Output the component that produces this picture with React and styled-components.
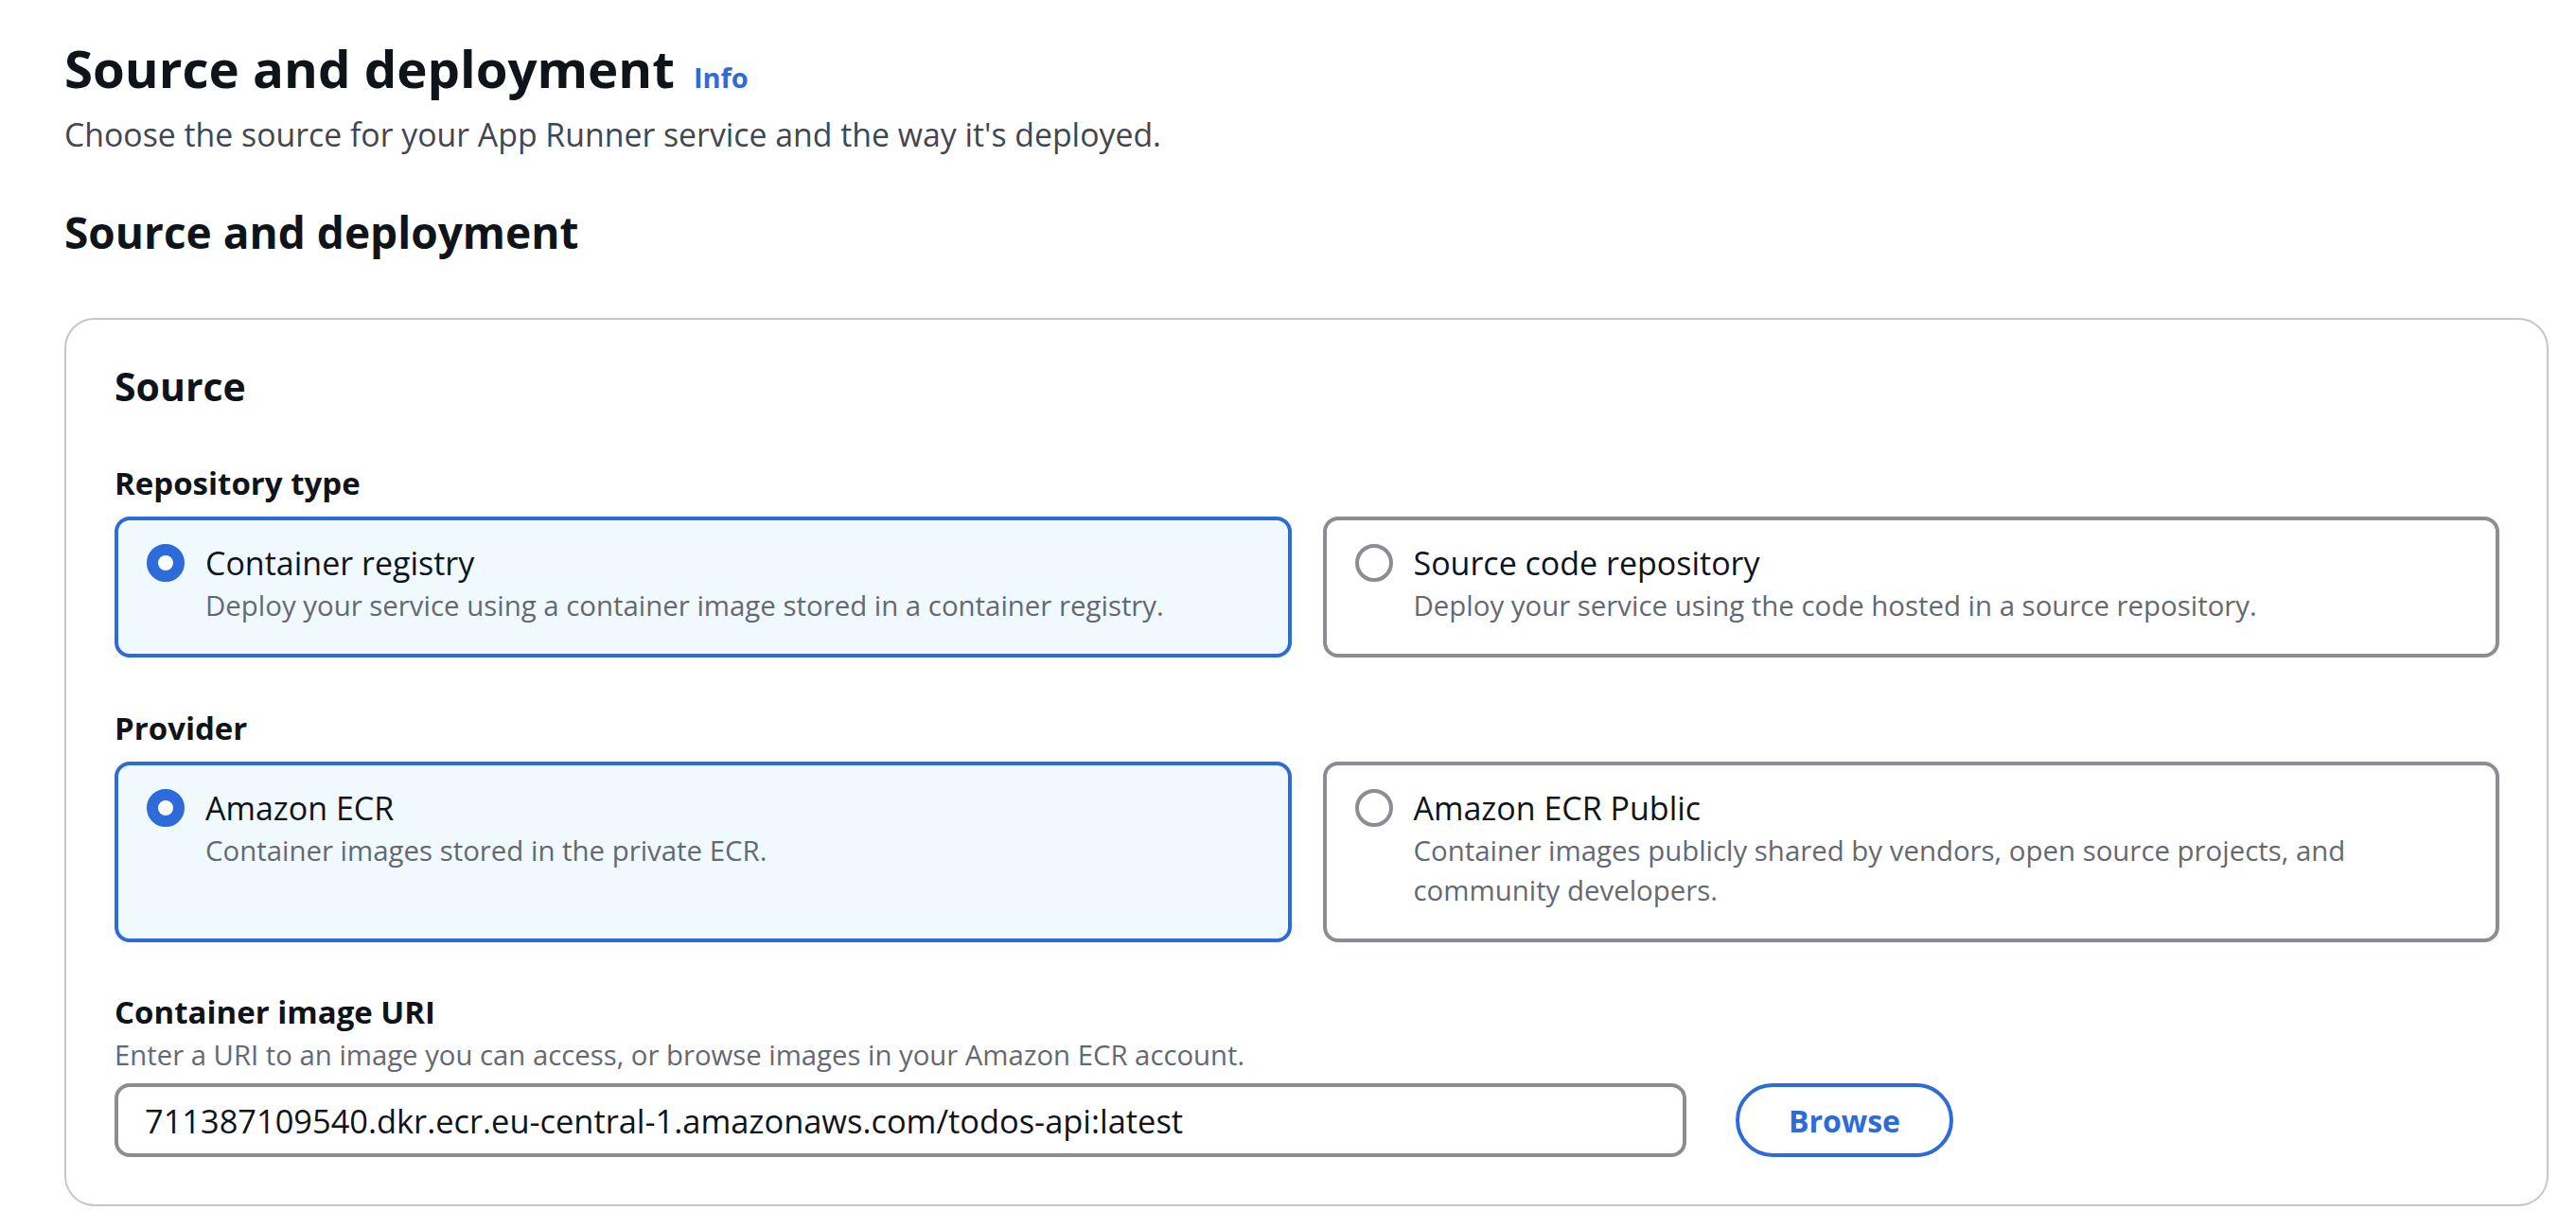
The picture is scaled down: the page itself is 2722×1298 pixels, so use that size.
import React from "react";
import styled, { createGlobalStyle } from "styled-components";

const GlobalStyle = createGlobalStyle`
  html, body { margin: 0; padding: 0; background: #ffffff; }
  body {
    font-family: "Open Sans", "Noto Sans", "Liberation Sans", sans-serif;
    color: #0f141a;
    -webkit-font-smoothing: antialiased;
  }
  * { box-sizing: border-box; }
`;

const Page = styled.main`
  padding: 42px 29px 19px 68px;
  display: flex;
  flex-direction: column;
`;

const TitleRow = styled.div`
  display: flex;
  align-items: baseline;
  gap: 20px;
`;

const H1 = styled.h1`
  margin: 0;
  font-size: 54.6px;
  line-height: 60px;
  font-weight: 700;
  color: #0f141a;
`;

const InfoLink = styled.a`
  font-size: 29px;
  font-weight: 700;
  color: #2c6bd9;
  text-decoration: none;
`;

const PageDescription = styled.p`
  margin: 20px 0 0;
  font-size: 33.8px;
  line-height: 40px;
  color: #424650;
`;

const H2 = styled.h2`
  margin: 57px 0 0;
  font-size: 46px;
  line-height: 52px;
  font-weight: 700;
  color: #0f141a;
`;

const Container = styled.section`
  margin-top: 65px;
  border: 2px solid #c6c6cd;
  border-radius: 32px;
  padding: 46px 50px 50px 51px;
  display: flex;
  flex-direction: column;
`;

const ContainerTitle = styled.h3`
  margin: 0;
  font-size: 41px;
  line-height: 48px;
  font-weight: 700;
  color: #0f141a;
`;

const Field = styled.div`
  margin-top: ${(p) => p.$top}px;
  display: flex;
  flex-direction: column;
`;

const Label = styled.label`
  font-size: 33px;
  line-height: 40px;
  font-weight: 700;
  color: #0f141a;
`;

const Hint = styled.div`
  margin-top: 5px;
  font-size: 29.3px;
  line-height: 40px;
  color: #656871;
`;

const TileGrid = styled.div`
  margin-top: 15px;
  display: grid;
  grid-template-columns: 1fr 1fr;
  gap: 33px;
`;

const Tile = styled.div`
  display: flex;
  align-items: flex-start;
  gap: 22px;
  padding: 25px 30px 30px 30px;
  border: 4px solid ${(p) => (p.$selected ? "#2c6bd9" : "#8c8c94")};
  background: ${(p) => (p.$selected ? "#f0f9fd" : "#ffffff")};
  border-radius: 16px;
`;

const Radio = styled.span`
  flex: 0 0 40px;
  width: 40px;
  height: 40px;
  border-radius: 50%;
  background: #ffffff;
  border: ${(p) => (p.$checked ? "12px solid #2c6bd9" : "4px solid #8c8c94")};
`;

const TileText = styled.div`
  display: flex;
  flex-direction: column;
  padding-right: 20px;
`;

const TileTitle = styled.div`
  font-size: 34px;
  line-height: 40px;
  color: #0f141a;
`;

const TileDesc = styled.div`
  margin-top: 4px;
  font-size: 29.4px;
  line-height: 42px;
  color: #656871;
`;

const InputRow = styled.div`
  margin-top: 10px;
  display: flex;
  align-items: center;
  gap: 52px;
`;

const TextInput = styled.input`
  width: 1661px;
  height: 78px;
  border: 4px solid #8c8c94;
  border-radius: 16px;
  padding: 0 28px;
  font-family: inherit;
  font-size: 34.4px;
  color: #0f141a;
  background: #ffffff;
  outline: none;
`;

const Button = styled.button`
  width: 230px;
  height: 78px;
  border: 4px solid #2c6bd9;
  border-radius: 40px;
  background: #ffffff;
  color: #2c6bd9;
  font-family: inherit;
  font-size: 32px;
  font-weight: 700;
  cursor: pointer;
`;

function OptionTile({ selected, title, description }) {
  return (
    <Tile $selected={selected}>
      <Radio $checked={selected} />
      <TileText>
        <TileTitle>{title}</TileTitle>
        <TileDesc>{description}</TileDesc>
      </TileText>
    </Tile>
  );
}

export default function App() {
  return (
    <>
      <GlobalStyle />
      <Page>
        <TitleRow>
          <H1>Source and deployment</H1>
          <InfoLink href="#">Info</InfoLink>
        </TitleRow>
        <PageDescription>
          Choose the source for your App Runner service and the way it's deployed.
        </PageDescription>
        <H2>Source and deployment</H2>
        <Container>
          <ContainerTitle>Source</ContainerTitle>
          <Field $top={59}>
            <Label>Repository type</Label>
            <TileGrid>
              <OptionTile
                selected
                title="Container registry"
                description="Deploy your service using a container image stored in a container registry."
              />
              <OptionTile
                title="Source code repository"
                description="Deploy your service using the code hosted in a source repository."
              />
            </TileGrid>
          </Field>
          <Field $top={55}>
            <Label>Provider</Label>
            <TileGrid>
              <OptionTile
                selected
                title="Amazon ECR"
                description="Container images stored in the private ECR."
              />
              <OptionTile
                title="Amazon ECR Public"
                description="Container images publicly shared by vendors, open source projects, and community developers."
              />
            </TileGrid>
          </Field>
          <Field $top={54}>
            <Label>Container image URI</Label>
            <Hint>
              Enter a URI to an image you can access, or browse images in your Amazon ECR account.
            </Hint>
            <InputRow>
              <TextInput
                readOnly
                value="711387109540.dkr.ecr.eu-central-1.amazonaws.com/todos-api:latest"
              />
              <Button type="button">Browse</Button>
            </InputRow>
          </Field>
        </Container>
      </Page>
    </>
  );
}
